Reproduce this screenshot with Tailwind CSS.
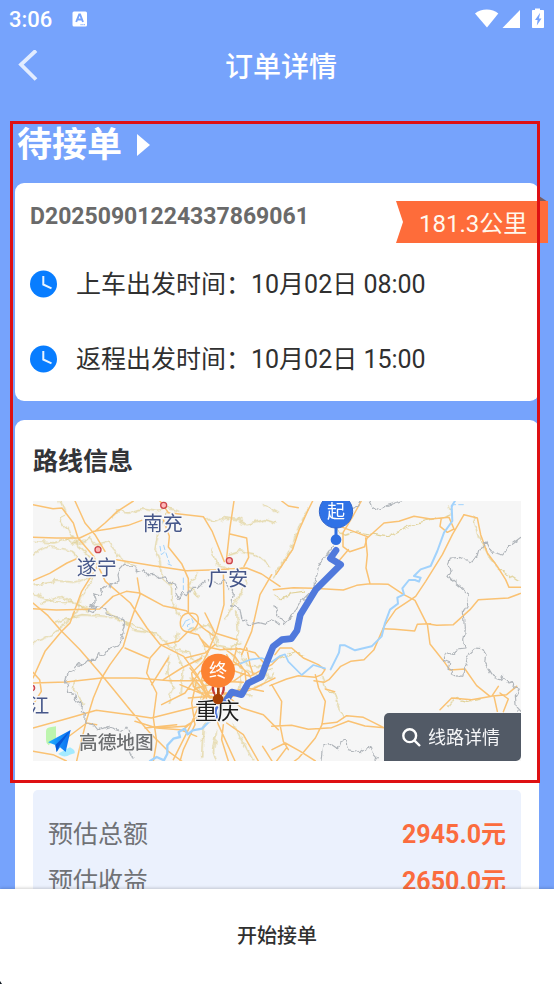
<!DOCTYPE html>
<html lang="zh-CN">
<head>
<meta charset="utf-8">
<meta name="viewport" content="width=device-width, initial-scale=1">
<title>订单详情</title>
<script src="https://cdn.jsdelivr.net/npm/@tailwindcss/browser@4"></script>
</head>
<body class="bg-[#76a3fc] font-['Roboto','Noto_Sans_CJK_SC',sans-serif] text-[#303030]">
<div class="relative flex h-screen flex-col overflow-hidden">

  <!-- Status bar -->
  <div class="flex h-[38px] shrink-0 items-center justify-between pl-[9px] pr-[10px] text-white">
    <div class="flex items-center gap-[20px]">
      <span class="pt-[2px] text-[22px] font-medium leading-none">3:06</span>
      <svg class="h-4 w-4" viewBox="0 0 16 16" aria-hidden="true"><rect x=".5" y=".5" width="14.500" height="15" rx="1.500" fill="#fff"/><path d="M4.200 11 7.200 3.500h.9L11 11M5.500 8.500h4.300" fill="none" stroke="#76a3fc" stroke-width="1.900"/><path d="M8.500 13.700h4.500" stroke="#76a3fc" stroke-width="1" stroke-dasharray="1.200 .6"/></svg>
    </div>
    <svg class="h-[22px] w-[70px]" viewBox="474 7 70 22" fill="#fff" aria-hidden="true">
      <path d="M475 12.500C481 7.200 492.500 7.200 498.300 12.500L487 26.500Z"/>
      <path d="M520 9v18h-17.500Z"/>
      <path d="M535 9v-1.500h5V9h3c.6 0 1 .4 1 1v16c0 .6-.4 1-1 1h-10c-.6 0-1-.4-1-1V10c0-.6.4-1 1-1Z"/>
      <path d="M539.800 12.200 535 19h2.600l-.8 5.500 4.700-7h-2.600l1.200-5.300Z" fill="#76a3fc"/>
    </svg>
  </div>

  <!-- Navigation -->
  <header class="grid h-14 shrink-0 grid-cols-[1fr_auto_1fr] items-center pl-[18px] pr-[10px] text-white">
    <button type="button" aria-label="返回" class="justify-self-start"><svg class="h-8 w-5" viewBox="0 0 20 32" fill="none" stroke="#e2ecff" stroke-width="3.800" aria-hidden="true"><path d="M18 .5 3 14.500 18 29.500"/></svg></button>
    <h1 class="pt-[3px] text-[28px] font-medium leading-none">订单详情</h1>
  </header>

  <main class="min-h-0 flex-1 overflow-hidden px-[15px] pt-[26px]">
    <h2 class="flex h-[50px] items-center gap-[15px] pl-[2px] text-[35px] font-bold text-white"><span class="pt-[3px]">待接单</span>
      <svg class="h-6 w-[13px]" viewBox="0 0 13 24" fill="#fff" aria-hidden="true"><path d="M0 1 13 12 0 23Z"/></svg>
    </h2>

    <!-- Order summary -->
    <section class="relative mt-[13px] rounded-[9px] bg-white px-[15px] pb-[17px] pt-[15px]">
      <p class="flex h-9 items-center pt-[2px] text-[23px] font-bold text-[#6a6a6a]">D20250901224337869061</p>
      <div class="absolute -right-[9px] top-[13px] h-[48px] w-[152px]">
        <svg class="absolute inset-0 h-full w-full" viewBox="0 0 152 48" aria-hidden="true"><path d="M143 0 152 6h-9Z" fill="#795d62"/><path d="M0 5h152v42H0l7-21Z" fill="#fe6c3a"/></svg>
        <span class="relative flex h-full items-center pl-[23px] pt-[7px] text-[24px] leading-none text-[#fff8ed]">181.3公里</span>
      </div>
      <ul class="mt-[25px] flex flex-col gap-[25px] text-[25px]">
        <li class="flex h-[50px] items-center gap-[18px]"><svg class="h-[28px] w-[28px]" viewBox="0 0 28 28" aria-hidden="true"><circle cx="13.500" cy="14" r="13.500" fill="#087dff"/><path d="M13.300 6v8.500l8.200 3.800" fill="none" stroke="#e9f4ff" stroke-width="2"/></svg><span class="pt-[2px]">上车出发时间：10月02日 08:00</span></li>
        <li class="flex h-[50px] items-center gap-[18px]"><svg class="h-[28px] w-[28px]" viewBox="0 0 28 28" aria-hidden="true"><circle cx="13.500" cy="14" r="13.500" fill="#087dff"/><path d="M13.300 6v8.500l8.200 3.800" fill="none" stroke="#e9f4ff" stroke-width="2"/></svg><span class="pt-[2px]">返程出发时间：10月02日 15:00</span></li>
      </ul>
    </section>

    <!-- Route -->
    <section class="mt-[19px] rounded-t-[9px] bg-white px-[18px] pb-5 pt-[23px]">
      <h2 class="flex h-9 items-center pt-[2px] text-[25px] font-bold text-[#333438]">路线信息</h2>
      <div class="relative mt-[22px]">
        <svg class="block h-auto w-full" viewBox="9 9 1464 780" role="img" aria-label="路线地图">
          <defs>
            <filter id="rough" filterUnits="userSpaceOnUse" x="0" y="0" width="1480" height="800"><feTurbulence type="fractalNoise" baseFrequency="0.045" numOctaves="2" seed="4"/><feDisplacementMap in="SourceGraphic" scale="20" xChannelSelector="R" yChannelSelector="G"/></filter>
            <linearGradient id="plane" x1="0" x2="1"><stop offset="0" stop-color="#22b0ff"/><stop offset="1" stop-color="#0a6cf0"/></linearGradient>
          </defs>
          <rect x="9" y="9" width="1464" height="780" fill="#f6f6f6"/>
          <g fill="none" stroke-linejoin="round" stroke-linecap="round">
            <!-- Minor roads -->
            <g stroke="#e0d196" stroke-width="3.500" filter="url(#rough)">
              <path d="M90 9l15 35-15 15 25 40 20 35 40 35 15 30M9 260l65-12 60 5 60-18M9 285l50 25 70 5 50 20M190 240l-30 45-25 65-25 25-45 35-55 25M75 375l80-25 70 5 60 18 30 25 65 10 40 40 50 15M175 120l25 20 35-10 25 30 15 25 40 20M110 120l20 15 35-5 15-15M245 60l20-20 30 5 40-12 45 7 30-10 40 10M415 45l-30 50-10 60 15 40 5 45 30 25M520 55l30 20 35-15 40 5 25 15 55-15 30 10M700 20l45 25M590 170l35-12 50 10 45 35M540 150l20 50 45 18 40-5M640 215l10 40-35 60-30 45M425 255v50l25 50M485 395l50-15 15 20 15 45M520 440l15 55-5 55-15 50M620 340l5 60-10 50 40 50 55 10M230 340l45 30 60 20 40 25M35 315l60-20 80 45M9 165l45-20 70 15 30 30M160 620l-30-45 5-35M9 130l60 5 60-20M420 470l-10 50 20 50-15 45M445 405l-10 45 25 65-10 75M545 630l-25 55-5 90M715 540l-15-30 5-25M560 700l-10 60 8 29M610 680l50 90 10 19M505 225l-30 40 30 30M535 400l20 40 45 10 30-20M605 470l30 45-10 60 40 20M480 540l30 30 5 55M470 460l30 35 20-20M650 520l30 10 45-15M640 580l50-15 40-40"/>
              <path transform="translate(726 0)" d="M9 290l20 15 30-20 35-5M109 30l-30 60-25 70-50 80M186 90l30 22 40-10 90 14 70-35 70-20M514 60l25-10-8-30M604 60l20 60 20 50 35 40 60 40M149 535l15 40 25 10 15 50 10 23M529 625l20-25 35 10 40-6M24 480l45-20 25 12"/>
            </g>
            <!-- Major roads -->
            <g stroke="#fac273" stroke-width="4.500">
              <path d="M9 20l60 12 27-2 34 45 14 45 47 55 35 75 75 65 50 75 40 50 70 35 40 55 30 60M9 118l70 2 70 0 42-20 49-8 55-10 40-15M135 9l30 66 30 35 30 50M310 9l-48 31-37 35-30 25M9 248l50-22 52-31 34-15M260 185l110 18 100 15 90-3 90-5 45 18 55 37M9 332l70 4 130-3 40-38 40-15 40 5 70 38 70 15 50 52 30 22M322 240l8 50-28 80-22 75-40 55-25 40-25 60-20 65-20 80-10 44M205 200l-50 80-35 95-25 25-50 60-36 80"/>
              <path d="M9 315l45 38 41 47 55 55 60 70 45 55 45 55 60 70 55 55 40 29M9 555l100-3 106-12 105 0 100 8 120 0 100 5M9 690l90-25 100-28 100 13 65 10 80-20 90-22M400 65l18 50-3 32 40 50 20 45 0 60 0 43M390 9l25 35 105 12 27 45 36 90M612 9l-12 80-10 90M600 108l50 12 6 58-14 27M580 220l2 100-22 80-30 70M725 230l-35 60-25 110-30 70M9 620l25-40-5-35-20-22M9 760l60 10 40 19M110 720l60-45 30 5"/>
              <path d="M475 345c-30 5-30 45-10 55s40-15 40-35-15-20-30-20M465 400l40 10 20 35 45 10 60-3 45 12 30 35M395 440l-35 40-10 45 30 60-10 75 10 70-10 60M500 545l-15 70 10 65-35 75-10 35M400 440l45-10 30-30M465 480l60-15 30-25M355 480l-70-30M365 560l50-80M400 545l55-35 60-30M395 620l70-35 45-65 65-10 60-15M510 420l30 30-20 40-35 35 5 40 35 30 45 10 40-25 40-10-5-50-30-45-35-25M480 510l45 55 20 45 20 70 50 109M500 570l60-15 50-5 35-25M525 500l-10 45 15 60-20 45-50 45M590 470l25 50 45 15 65-35 25-25M490 540l50 60 60 0 35 30 65 20 45 45M450 560l60 25 80 0M580 680l-5 45 20 64M590 675l50 35 45 79M515 655l-50 30-85 5-65-20M380 690l70 5 50 20M430 785l50-100 30-70 40-50M620 450l-10 40 45 35 15 30M650 450l10 50 10 30M735 540l-60 30-80 30M700 580l-50-10-70 20M620 425l-65-20-30-60M535 550l10-60M475 600l70-5 40 25M345 690l95-10"/>
              <path d="M848 9l-15 30-25 55-20 60-50 75M755 9l20 15 30 5M994 9l-25 45-30 50 0 42 20 15 45-15 8-30-40-15-40-15M955 155l-28 33M1012 120l50-45 45-5 45-15 50 8 55-5 15 35-20 10-22-18 4-25M1302 50l-35 60-30 60-50 80-30 45-60 40-35 50-30 70-30 30-40 5-30 15-35 40-15 8-30-5"/>
              <path d="M730 275l60-6 60 2 90 5 40-14 40-5 55 2 45 30 35 18 35 70 30 5 50-2 50-45 25-30 90-5 80-30M1007 120l5 50-4 40 12 47M1302 50l40 10 10 50 20 55 30 40 25 40 10 23 35 0M1059 392l35 2 60 5 8-20 40-2M1192 378l8 60 40 50 20 28 45-3 35 50 40 32 50-5 30-25M1230 635l35-35 60 5 60-10 20-30M1392 595l10 45M1410 585l25 18-15 38M735 470l15-20 35 0 35 30 45 20 20 15-10 15-20 8-50-5-35 10-50 20M856 530l10 40 20 40-10 70-20 40-50 60-40 30-30-5-38-60M725 560l30 50-5 70 10 50 15 25M725 685l60-3 50 12 70-5 50-20 50 15 58 5M875 678l45-5 30-20 50 5 60 30M726 755l40-20 45 25 45 29M740 789l30-40M886 573l28 8"/>
            </g>
            <!-- Province and county borders -->
            <g stroke="#b0b5ba" stroke-width="3.500" filter="url(#rough)">
              <path d="M525 250l-20 18-18 0-18 25-12-8-10 17-10-18 0-22-15-6-14-20-22 5-14-12-18 2-14-16-18 6-12-14-14 4-12-13-12 13-8 20 3 15-22 9-5 15-18-4-10 14 4 15-28-8 8 22-12 18 14 2-5 12-18-8 9-12 15 5 28 5 4 15 26 14 18 0 9 15-4 20-8 15 5 14-12 20-32 12-9 15-18-4-10 20-20 0-16 17-18-4-10 19-18 8-6 20 7 20-3 20 18 5 12 18 13 9-4 21 18 5-2 30 25 6 12 15 30-10 38 12 15-12 12 16-4 12-12 7 22 10-8 20 12 30M535 245l30 10 20-8 25 40-5 35 25 10 5 30 20 20 30-8 20 5 20-15 20 13"/>
              <path d="M910 140l-12 20-30 40-20 75-35 35-20 35-30 28-20-20-8-30M1020 9l10 20 25 8 15-15 20-5 22-8M963 35l20-8 8-18M1473 118l-35 25-20 28-35-10-16-32-18 28-5 17-25 17-32-13-26 2-5 22 10 15-12 15 15 18 32 25 16 15-5 30-9 25 3 50-5 30 4 28-25 3-15 15-18-5-8 20 20 8-5 17 15 7-5 10 20 10 15-7 2-23 10-10-4-20 30-28 17 2 12 20-2 25 18 30 30 20 7-12 18 20 12-4-3 17 22 5-12 20 3 35 18 20M876 785l5-40 20-8 22 15 8-20 15-5 8 28 25 4 10 8 20-15 15-6 5 17 13 15-6 11"/>
            </g>
            <!-- Rivers -->
            <g stroke="#a1d2fc" stroke-width="7">
              <path d="M1275 9l-10 15 2 45-25 35-20 55-20 45-30 10-20 20 20 5-5 12-12-5-18 0-20 25 5 18-20 10 2 18-24 18-15 40-10 40-30 30-50 12-30-15-15 0-3 22-25 50" stroke-width="6"/>
              <path d="M885 511l-35-10-35 30-40-40-10-22-15 5-25 18-30-12-35 5-30 12" stroke-width="5"/>
              <path d="M360 789l20-12 22 10 10-20 0-25 18-20 20-5-4-15 18-10 9 17 15-12 28-5 20-20 25-12 15-40"/>
              <path stroke-width="3" stroke-dasharray="14 9" d="M1300 20l-30 0-8 15M465 370l20-9 5 12-18 8 3 15 13-8M458 385l8-14M390 145l4 25 12-10-5-18M408 165l10 30M414 198l10 4M397 70l-5 18M460 240l0 35"/>
            </g>
            <path d="M918 157l-17 24 31 19-75 75-46 75-10 48-17 24-28 3-27 21-20 50-15 40-40 20-19 34-30-8-17 26" stroke="#5079dc" stroke-width="20"/>
          </g>
          <!-- Cities -->
          <g fill="#ffb8b8" stroke="#cb4449" stroke-width="4"><circle cx="401" cy="22" r="9"/><circle cx="204" cy="155" r="9"/><circle cx="598" cy="188" r="9"/><circle cx="6" cy="570" r="8"/></g>
          <g class="font-['Noto_Sans_CJK_SC',sans-serif]" font-size="60" fill="#46578a" stroke="#f8f8f8" stroke-width="9" paint-order="stroke" stroke-linejoin="round">
            <text x="338" y="98">南充</text><text x="140" y="231">遂宁</text><text x="534" y="264">广安</text><text x="-2" y="646">江</text>
          </g>
          <path d="M563 625c-13 15-5 38 3 35" fill="none" stroke="#4b70d8" stroke-width="8"/>
          <path d="M549 565q-2 20 12 28M581 565q2 20-12 28" fill="none" stroke="#c73b36" stroke-width="7"/><path d="M558 568v24M572 568v24" stroke="#fff" stroke-width="4"/><path d="M565 568v30" stroke="#a74207" stroke-width="8"/>
          <text class="font-['Noto_Sans_CJK_SC',sans-serif]" x="495" y="663" font-size="67" fill="#1d1d1d" stroke="#f8f8f8" stroke-width="7" paint-order="stroke">重庆</text>
          <circle cx="564" cy="603" r="16" fill="#a74207"/>
          <circle cx="564" cy="518" r="51" fill="#fc8232"/>
          <text class="font-['Noto_Sans_CJK_SC',sans-serif]" x="537" y="538" font-size="54" fill="#fff">终</text>
          <path d="M918 80v45" stroke="#2f6fe1" stroke-width="9"/><circle cx="918" cy="125" r="16" fill="#2f6fe1"/>
          <circle cx="918" cy="40" r="50" fill="#2f72e6" stroke="#3265ca" stroke-width="3"/>
          <text class="font-['Noto_Sans_CJK_SC',sans-serif]" x="891" y="61" font-size="54" fill="#fff">起</text>
          <!-- Map provider mark -->
          <path d="M48 700q0-10 12-12l18-3v35l-22 22q-8-5-8-15Z" fill="#bdf5ae"/><path d="M88 765l32-17q17 8 14 18-18 5-22 8-12 4-22-3-8-3-2-6Z" fill="#a4eaff"/>
          <path d="M122 696 107 762 90 748 80 762 76 741 54 733Z" fill="url(#plane)"/><path d="M122 696 76 741 80 762 88 745Z" fill="#0758d8"/>
          <text class="font-['Noto_Sans_CJK_SC',sans-serif]" x="147" y="752" font-size="56" font-weight="500" fill="#6c6e70" stroke="#f6f6f6" stroke-width="5" paint-order="stroke">高德地图</text>
        </svg>
        <button type="button" class="absolute bottom-0 right-0 flex h-12 items-center gap-[7px] rounded-br-[5px] rounded-tl-[5px] bg-[#525a66] pl-[18px] pr-[21px] text-[18px] text-[#f5f6f8]">
          <svg class="h-[19px] w-[19px]" viewBox="0 0 19 19" fill="none" stroke="#fff" stroke-width="2.400" aria-hidden="true"><circle cx="7.700" cy="7.700" r="6.400"/><path d="m12.300 12.300 5.700 5.700"/></svg>线路详情
        </button>
      </div>
      <dl class="mt-[29px] rounded-[5px] bg-[#ebf1fd] px-[15px] py-5 text-[25px]">
        <div class="flex h-[47px] items-center justify-between pt-[2px]"><dt class="text-[#707276]">预估总额</dt><dd class="font-bold text-[#fb6c3e]">2945.0元</dd></div>
        <div class="flex h-[47px] items-center justify-between pt-[2px]"><dt class="text-[#707276]">预估收益</dt><dd class="font-bold text-[#fb6c3e]">2650.0元</dd></div>
      </dl>
    </section>
  </main>

  <footer class="relative shrink-0 bg-white shadow-[0_-1px_3px_rgba(0,0,0,0.18)]">
    <button type="button" class="flex h-[95px] w-full items-center justify-center pb-[1px] text-[20px] font-medium">开始接单</button>
    <svg class="absolute bottom-0 left-0 h-[3px] w-[2px]" viewBox="0 0 2 3" aria-hidden="true"><path d="M0 0 2 3H0Z" fill="#101820"/></svg>
  </footer>

  <!-- Highlight frame over the order and route cards -->
  <div class="pointer-events-none absolute left-[10px] right-[14px] top-[121px] h-[662px] border-[3px] border-[#de1013]"></div>
</div>
</body>
</html>
